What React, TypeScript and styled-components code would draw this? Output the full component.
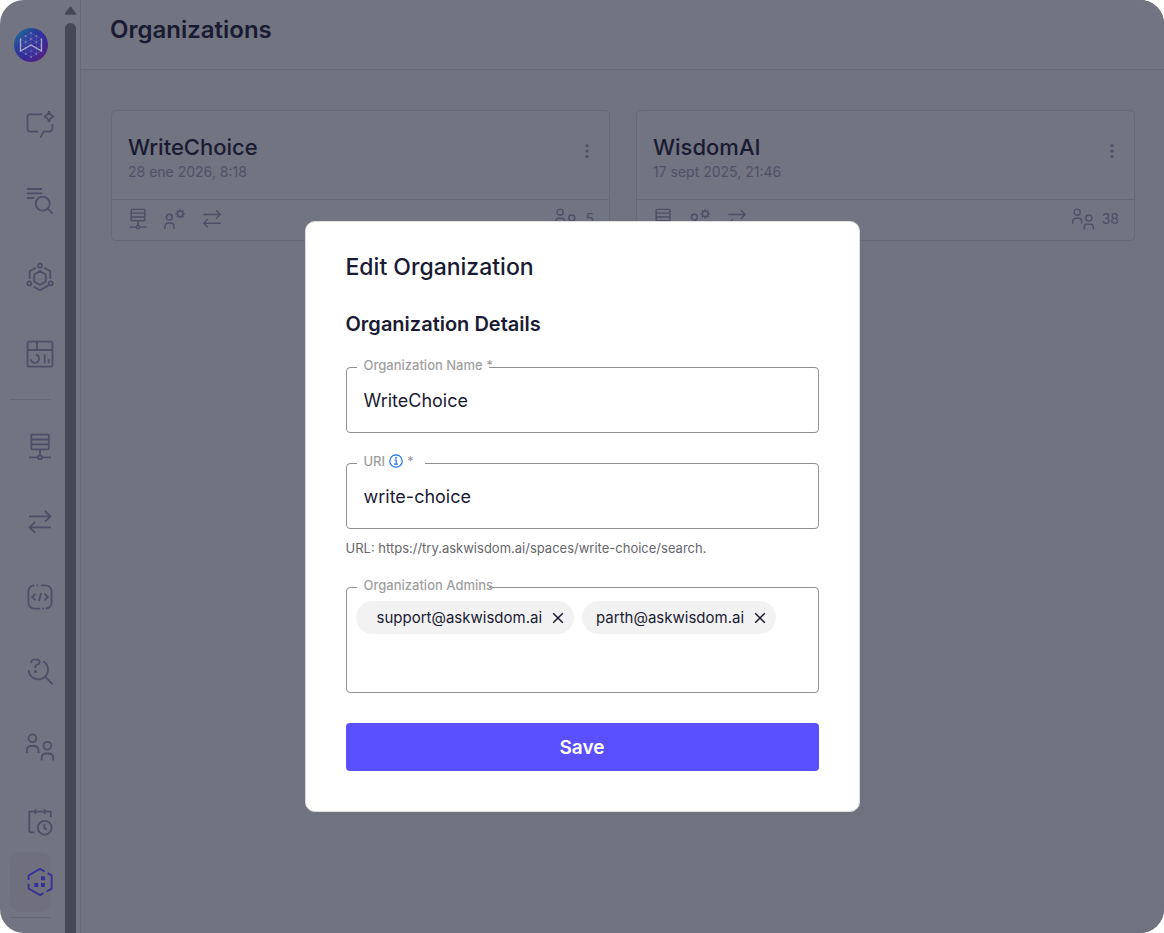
import React from "react";
import styled, { createGlobalStyle } from "styled-components";

const c = {
  bar: "#727481",
  main: "#70727f",
  line: "#666875",
  ink: "#1a1a33",
  muted: "#505168",
  icon: "#4e4e69",
  active: "#35309a",
};

const GlobalStyle = createGlobalStyle`
  *, *::before, *::after { box-sizing: border-box; }
  body { margin: 0; background: #fff; font-family: Inter, "Liberation Sans", sans-serif; color: ${c.ink}; }
  h1, h2, h3, p { margin: 0; }
  button, input { font: inherit; color: inherit; }
`;

const Shell = styled.div`
  display: flex;
  height: 100vh;
  border-radius: 24px;
  overflow: hidden;
  background: ${c.bar};
`;

const Sidebar = styled.aside`
  display: flex;
  flex: none;
  width: 81px;
  border-right: 1px solid ${c.line};
`;

const NavColumn = styled.nav`
  flex: none;
  width: 65px;
  padding: 28px 14px 0 10px;
`;

const LogoLink = styled.a`
  display: block;
  width: 34px;
  height: 34px;
  margin: 0 0 31px 4px;
`;

const NavGroup = styled.div<{ $gap: number }>`
  display: flex;
  flex-direction: column;
  gap: ${(p) => p.$gap}px;
`;

const NavItem = styled.a<{ $active?: boolean }>`
  display: flex;
  align-items: center;
  height: 60px;
  padding-left: 16px;
  border-radius: 10px;
  color: ${(p) => (p.$active ? c.active : c.icon)};
  background: ${(p) => (p.$active ? "#706f7e" : "transparent")};
`;

const Divider = styled.hr<{ $top: number; $bottom: number }>`
  border: 0;
  height: 1px;
  margin: ${(p) => p.$top}px 0 ${(p) => p.$bottom}px;
  background: ${c.line};
`;

const ScrollTrack = styled.div`
  display: flex;
  flex-direction: column;
  align-items: center;
  width: 11px;
  padding-top: 6px;
  gap: 8px;
`;

const ScrollThumb = styled.div`
  flex: 1;
  width: 11px;
  border-radius: 6px 6px 0 0;
  background: #464855;
`;

const Content = styled.div`
  flex: 1;
  min-width: 0;
  background: ${c.main};
`;

const Header = styled.header`
  display: flex;
  align-items: center;
  height: 70px;
  padding: 0 29px 10px;
  border-bottom: 1px solid ${c.line};
  background: ${c.bar};
`;

const PageTitle = styled.h1`
  font-size: 24px;
  line-height: 32px;
  font-weight: 600;
`;

const CardGrid = styled.main`
  display: grid;
  grid-template-columns: 1fr 1fr;
  gap: 26px;
  padding: 40px 29px 40px 30px;
`;

const Card = styled.article`
  border: 1px solid ${c.line};
  border-radius: 5px;
  background: ${c.bar};
`;

const CardTop = styled.div`
  display: flex;
  align-items: flex-start;
  justify-content: space-between;
  height: 89px;
  padding: 22px 14px 0 16px;
  border-bottom: 1px solid ${c.line};
`;

const CardTitle = styled.h2`
  font-size: 22px;
  line-height: 28px;
  font-weight: 500;
`;

const CardDate = styled.p`
  font-size: 14px;
  line-height: 22px;
  color: ${c.muted};
`;

const MenuButton = styled.button`
  display: flex;
  justify-content: center;
  width: 16px;
  margin-top: 10px;
  padding: 0;
  border: 0;
  background: none;
  color: ${c.icon};
`;

const CardFooter = styled.div`
  display: flex;
  align-items: center;
  gap: 15px;
  height: 40px;
  padding: 0 15px 2px;
  color: ${c.icon};
`;

const Members = styled.span`
  display: flex;
  align-items: center;
  gap: 8px;
  margin-left: auto;
  font-size: 14px;
  line-height: 20px;
`;

const Overlay = styled.div`
  position: fixed;
  inset: 0;
  display: flex;
  align-items: center;
  justify-content: center;
  padding: 100px 16px 0;
`;

const Dialog = styled.form`
  display: flex;
  flex-direction: column;
  width: 100%;
  max-width: 555px;
  padding: 29px 40px 40px;
  border: 1px solid #dcdce2;
  border-radius: 10px;
  background: #fff;
`;

const DialogTitle = styled.h2`
  font-size: 23px;
  line-height: 32px;
  font-weight: 500;
`;

const SectionTitle = styled.h3`
  margin: 27px 0 29px;
  font-size: 20px;
  line-height: 28px;
  font-weight: 600;
`;

const Field = styled.div<{ $tall?: boolean }>`
  position: relative;
  display: flex;
  flex-wrap: wrap;
  align-content: flex-start;
  gap: 8px;
  height: ${(p) => (p.$tall ? 106 : 66)}px;
  padding: ${(p) => (p.$tall ? "13px 9px" : "0")};
  border: 1px solid #919196;
  border-radius: 4px;
`;

const FieldLabel = styled.label<{ $notch: number }>`
  position: absolute;
  top: -11px;
  left: 10px;
  display: flex;
  align-items: center;
  gap: 4px;
  width: ${(p) => p.$notch}px;
  height: 16px;
  padding-left: 7px;
  background: #fff;
  color: #9f9fa1;
  font-size: 13px;
  line-height: 16px;
  font-weight: 500;
  white-space: nowrap;
`;

const TextInput = styled.input`
  width: 100%;
  height: 100%;
  padding: 0 17px;
  border: 0;
  outline: 0;
  background: none;
  font-size: 18px;
`;

const Helper = styled.p`
  margin: 10px 0 30px;
  font-size: 13px;
  line-height: 18px;
  color: #66666c;
`;

const Chip = styled.span<{ $inset: number }>`
  display: flex;
  align-items: center;
  gap: 10px;
  height: 33px;
  padding: 0 10px 0 ${(p) => p.$inset}px;
  border-radius: 17px;
  background: #f2f2f2;
  font-size: 15px;
  line-height: 20px;
`;

const ChipRemove = styled.button`
  display: flex;
  padding: 0;
  border: 0;
  background: none;
`;

const AdminInput = styled.input`
  flex: 1;
  min-width: 120px;
  height: 33px;
  padding: 0 8px;
  border: 0;
  outline: 0;
  background: none;
  font-size: 15px;
`;

const SaveButton = styled.button`
  height: 48px;
  margin-top: 30px;
  border: 0;
  border-radius: 4px;
  background: #5a50ff;
  color: #fff;
  font-size: 19px;
  font-weight: 600;
`;

const Spacer = styled.div`
  height: 30px;
`;

const IconSvg = styled.svg`
  flex: none;
  display: block;
  fill: none;
  stroke: currentColor;
  stroke-width: 1.8;
`;

const drawings = {
  chat: (
    <>
      <path d="M16 5.300H4a2.500 2.500 0 0 0-2.500 2.500v12.300A2.500 2.500 0 0 0 4 22.600h8M14.500 28.600l3-6H23a3.500 3.500 0 0 0 3.500-3.500V15" />
      <path d="M23 2.200c.6 3.400 1.800 4.700 5 5.400-3.200.7-4.400 2-5 5.400-.6-3.400-1.800-4.700-5-5.400 3.200-.7 4.400-2 5-5.400z" />
    </>
  ),
  search: (
    <>
      <path d="M1 3h15M1 7.400h15M1 12h7.500M21.700 22.700l5 5" />
      <circle cx="16.700" cy="17.700" r="7" />
    </>
  ),
  network: (
    <>
      <circle cx="14" cy="2.700" r="2" />
      <circle cx="3.300" cy="20.400" r="2" />
      <circle cx="24.700" cy="20.400" r="2" />
      <path d="M9.800 4.800L3.700 8.300V16M18.200 4.800l6.100 3.500V16M7.700 23.600l6.300 3.700 8.500-5M14 8l5.700 3.400v7.200L14 22l-5.700-3.400v-7.200z" />
    </>
  ),
  dashboard: (
    <>
      <rect x="1.500" y="1.700" width="25" height="25" rx="1.500" />
      <path d="M1.500 10h25M11 1.700V10M9.800 14.500a4.200 4.200 0 1 1-5 5M18.700 14.300v9M22.700 19.300v4" />
    </>
  ),
  database: (
    <>
      <rect x="5.300" y="1.700" width="17.500" height="14.600" rx="1" />
      <path d="M5.300 6.500h17.500M5.300 11.400h17.500M14 16.300V22M3 24.300h9M16 24.300h9" />
      <circle cx="14" cy="24.300" r="2" />
    </>
  ),
  arrows: (
    <path d="M3 8.300h21.500M19 3l5.500 5.300L19 13.600M25 19.400H3.500M9 14.100l-5.500 5.300L9 24.700" />
  ),
  code: (
    <>
      <path d="M8.300 2.400A6 6 0 0 0 2.400 8.400v11.200a6 6 0 0 0 6 6h6M10.500 2.400H12M14.700 2.400h4.900a6 6 0 0 1 6 6v11.200a6 6 0 0 1-6 6M16.300 25.600h1.600" />
      <path d="M9.500 10.700L6.200 14l3.300 3.300M18.500 10.700l3.300 3.300-3.300 3.300M15.200 10l-2.400 8" />
    </>
  ),
  question: (
    <>
      <path d="M17.300 3.300A9.700 9.700 0 1 1 2.600 12M19.500 19.200l7.200 7.200" />
      <path d="M5.300 5.200V4.600C5.300 2.500 6.500 1.600 8 1.600h2.800c1.700 0 2.800 1 2.800 2.400S12.600 6.300 11.300 6.700c-1.300.4-2 .9-2 2v1.200" />
      <circle cx="9.400" cy="13.500" r=".7" fill="currentColor" />
    </>
  ),
  users: (
    <>
      <circle cx="6.500" cy="5.300" r="3.900" />
      <circle cx="21.400" cy="12.800" r="3.900" />
      <path d="M.9 20v-3a4 4 0 0 1 4-4h3.500a4 4 0 0 1 4 4v3M15.600 27.500v-3a4 4 0 0 1 4-4h3.600a4 4 0 0 1 4 4v3" />
    </>
  ),
  calendar: (
    <>
      <path d="M8.300 24.400H5a1.700 1.700 0 0 1-1.700-1.700V3.700h21.500v5.600M9.400 1.200V6M18.700 1.200V6" />
      <circle cx="18.700" cy="19.700" r="6.900" />
      <path d="M18.400 15.800v4l2.300 2" />
    </>
  ),
  org: (
    <>
      <path d="M18.700 3.500L14 .9 2.600 7.400V12M2.600 15.800v4.800L14 27.100l3.500-2M20.700 23.400l5-2.800V7.400l-4-2.300" />
      <path
        d="M15 8.300h3.900v3.900H15zM8.300 15h3.900v3.900H8.300zM15 15h3.900v3.900H15z"
        fill="currentColor"
        stroke="none"
      />
    </>
  ),
  userGear: (
    <>
      <circle cx="6.800" cy="11.700" r="3.700" />
      <path d="M1.200 26.700v-3.600a4 4 0 0 1 4-4h3.400a4 4 0 0 1 4 4v3.600" />
      <circle cx="20.600" cy="7.500" r="3.600" />
      <path d="M20.600 1.500v2.400M20.600 11.100v2.400M14.600 7.500H17M24.200 7.500h2.400M16.400 3.300l1.700 1.700M23.100 10l1.700 1.700M16.400 11.700l1.700-1.700M23.100 5l1.700-1.700" />
    </>
  ),
};

type IconName = keyof typeof drawings;

function Icon({ name, size = 28 }: { name: IconName; size?: number }) {
  return (
    <IconSvg width={size} height={size} viewBox="0 0 28 28" aria-hidden="true" overflow="visible">
      {drawings[name]}
    </IconSvg>
  );
}

function Logo() {
  return (
    <svg width="34" height="34" viewBox="0 0 34 34" aria-hidden="true">
      <defs>
        <linearGradient id="logoFill" x1="0.1" y1="0.1" x2="0.85" y2="0.9">
          <stop offset="0" stopColor="#1c6c93" />
          <stop offset="0.3" stopColor="#2b3f9c" />
          <stop offset="0.65" stopColor="#36289a" />
          <stop offset="1" stopColor="#54237f" />
        </linearGradient>
      </defs>
      <circle cx="17" cy="17" r="17" fill="url(#logoFill)" />
      <g fill="none" stroke="#5a64ae" strokeWidth="0.6">
        <path d="M17 5l10.500 6v12L17 29 6.500 23V11zM17 5v24M6.500 11L27.500 23M27.500 11L6.500 23M11.700 8v18M22.300 8v18M11.700 8L27.500 17 11.700 26M22.300 8L6.500 17l15.800 9" />
      </g>
      <g fill="#6f79b6">
        <circle cx="17" cy="5" r="1" />
        <circle cx="17" cy="11" r="1" />
        <circle cx="11.700" cy="8" r="1" />
        <circle cx="22.300" cy="8" r="1" />
        <circle cx="11.700" cy="14" r="1" />
        <circle cx="22.300" cy="14" r="1" />
        <circle cx="11.700" cy="26" r="1" />
        <circle cx="22.300" cy="26" r="1" />
        <circle cx="17" cy="29" r="1" />
      </g>
      <path d="M6.500 10.500V23L17 17l10.500 6V10.500" fill="none" stroke="#a3a8c4" strokeWidth="1.400" />
    </svg>
  );
}

const primaryNav: [IconName, string][] = [
  ["chat", "Chat"],
  ["search", "Search"],
  ["network", "Models"],
  ["dashboard", "Dashboards"],
];

const adminNav: [IconName, string][] = [
  ["database", "Data sources"],
  ["arrows", "Transfers"],
  ["code", "Developer"],
  ["question", "Questions"],
  ["users", "Users"],
  ["calendar", "Schedules"],
];

const organizations = [
  { name: "WriteChoice", date: "28 ene 2026, 8:18", members: 5 },
  { name: "WisdomAI", date: "17 sept 2025, 21:46", members: 38 },
];

const admins = [
  { email: "support@askwisdom.ai", inset: 21 },
  { email: "parth@askwisdom.ai", inset: 14 },
];

function NavLinks({ items }: { items: [IconName, string][] }) {
  return (
    <>
      {items.map(([name, label]) => (
        <NavItem key={name} href="#" aria-label={label}>
          <Icon name={name} />
        </NavItem>
      ))}
    </>
  );
}

export default function App() {
  return (
    <>
      <GlobalStyle />
      <Shell>
        <Sidebar>
          <NavColumn>
            <LogoLink href="#" aria-label="Home">
              <Logo />
            </LogoLink>
            <NavGroup $gap={17}>
              <NavLinks items={primaryNav} />
            </NavGroup>
            <Divider $top={15} $bottom={17} />
            <NavGroup $gap={15}>
              <NavLinks items={adminNav} />
            </NavGroup>
            <NavItem href="#" aria-label="Organizations" $active>
              <Icon name="org" />
            </NavItem>
            <Divider $top={5} $bottom={0} />
          </NavColumn>
          <ScrollTrack aria-hidden="true">
            <svg width="13" height="9" viewBox="0 0 13 9">
              <path
                d="M6.500 1.200L11.500 8H1.500z"
                fill="#464855"
                stroke="#464855"
                strokeWidth="1.500"
                strokeLinejoin="round"
              />
            </svg>
            <ScrollThumb />
          </ScrollTrack>
        </Sidebar>
        <Content>
          <Header>
            <PageTitle>Organizations</PageTitle>
          </Header>
          <CardGrid>
            {organizations.map((org) => (
              <Card key={org.name}>
                <CardTop>
                  <div>
                    <CardTitle>{org.name}</CardTitle>
                    <CardDate>{org.date}</CardDate>
                  </div>
                  <MenuButton type="button" aria-label={`${org.name} menu`}>
                    <svg width="4" height="16" viewBox="0 0 4 16" fill="currentColor">
                      <circle cx="2" cy="2.500" r="1.600" />
                      <circle cx="2" cy="8" r="1.600" />
                      <circle cx="2" cy="13.500" r="1.600" />
                    </svg>
                  </MenuButton>
                </CardTop>
                <CardFooter>
                  <Icon name="database" size={22} />
                  <Icon name="userGear" size={22} />
                  <Icon name="arrows" size={22} />
                  <Members>
                    <Icon name="users" size={22} />
                    {org.members}
                  </Members>
                </CardFooter>
              </Card>
            ))}
          </CardGrid>
        </Content>
      </Shell>
      <Overlay>
        <Dialog role="dialog" aria-labelledby="dialog-title" onSubmit={(e) => e.preventDefault()}>
          <DialogTitle id="dialog-title">Edit Organization</DialogTitle>
          <SectionTitle>Organization Details</SectionTitle>
          <Field>
            <FieldLabel htmlFor="org-name" $notch={132}>
              Organization Name *
            </FieldLabel>
            <TextInput id="org-name" defaultValue="WriteChoice" />
          </Field>
          <Spacer />
          <Field>
            <FieldLabel htmlFor="org-uri" $notch={68}>
              URI
              <svg width="14" height="14" viewBox="0 0 14 14" fill="none" stroke="#1a73f0" strokeWidth="1.200" aria-hidden="true">
                <circle cx="7" cy="7" r="6.200" />
                <path d="M5.400 6h1.800v4M5 10.100h4" />
                <circle cx="7" cy="3.800" r=".4" />
              </svg>
              *
            </FieldLabel>
            <TextInput id="org-uri" defaultValue="write-choice" />
          </Field>
          <Helper>URL: https://try.askwisdom.ai/spaces/write-choice/search.</Helper>
          <Field $tall>
            <FieldLabel htmlFor="org-admins" $notch={132}>
              Organization Admins
            </FieldLabel>
            {admins.map((a) => (
              <Chip key={a.email} $inset={a.inset}>
                {a.email}
                <ChipRemove type="button" aria-label={`Remove ${a.email}`}>
                  <svg width="12" height="12" viewBox="0 0 12 12" stroke="currentColor" strokeWidth="1.500">
                    <path d="M1.200 1.200l9.600 9.600M10.800 1.200l-9.600 9.600" />
                  </svg>
                </ChipRemove>
              </Chip>
            ))}
            <AdminInput id="org-admins" />
          </Field>
          <SaveButton type="submit">Save</SaveButton>
        </Dialog>
      </Overlay>
    </>
  );
}
